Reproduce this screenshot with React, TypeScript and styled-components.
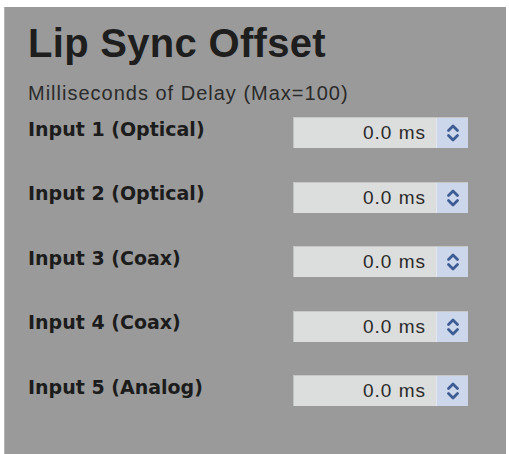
import React, { useState } from "react";
import styled, { createGlobalStyle } from "styled-components";

const GlobalStyle = createGlobalStyle`
	html, body {
		margin: 0;
		padding: 0;
		background-color: #ffffff;
	}
	body {
		font-family: "Liberation Sans", Arial, sans-serif;
	}
`;

const inputs = [
	"Input 1 (Optical)",
	"Input 2 (Optical)",
	"Input 3 (Coax)",
	"Input 4 (Coax)",
	"Input 5 (Analog)",
];

// up/down arrows of the number stepper
const Spinner: React.FC = () => (
	<svg width='14' height='20' viewBox='0 0 14 20'>
		<path
			d='M2.5 7.5 L7 3 L11.5 7.5'
			fill='none'
			stroke='#3d5c94'
			strokeWidth='2.8'
			strokeLinecap='round'
			strokeLinejoin='round'
		/>
		<path
			d='M2.5 12.5 L7 17 L11.5 12.5'
			fill='none'
			stroke='#3d5c94'
			strokeWidth='2.8'
			strokeLinecap='round'
			strokeLinejoin='round'
		/>
	</svg>
);

const App: React.FC = () => {
	const [values] = useState(inputs.map(() => 0));

	return (
		<>
			<GlobalStyle />
			<Panel>
				<Title>Lip Sync Offset</Title>
				<Sub>Milliseconds of Delay (Max=100)</Sub>
				<List>
					{inputs.map((name, i) => (
						<Row key={name}>
							<Label>{name}</Label>
							<Box>
								<Value>{values[i].toFixed(1)} ms</Value>
								<Spin>
									<Spinner />
								</Spin>
							</Box>
						</Row>
					))}
				</List>
			</Panel>
		</>
	);
};

export default App;

const Panel = styled.div`
	margin: 7px 3px 0 4px;
	min-height: 447px;
	background-color: #9a9a9a;
	padding: 16px 0 0 23px;
	box-sizing: border-box;
	border-left: 1px solid #b4b4b4;
`;

const Title = styled.div`
	font-size: 40px;
	line-height: 40px;
	font-weight: 700;
	letter-spacing: 0.3px;
	color: #1e1e1e;
`;

const Sub = styled.div`
	margin-top: 18px;
	font-size: 20px;
	line-height: 24px;
	letter-spacing: 1px;
	color: #2a2a2a;
`;

const List = styled.div`
	margin-top: 12px;
	display: flex;
	flex-direction: column;
	gap: 33.5px;
`;

const Row = styled.div`
	display: flex;
	align-items: center;
	height: 31px;
`;

const Label = styled.div`
	width: 265px;
	margin-bottom: 8px;
	font-family: "DejaVu Sans", Verdana, sans-serif;
	font-size: 19px;
	line-height: 22px;
	font-weight: 700;
	color: #1c1c1c;
`;

const Box = styled.div`
	display: flex;
	width: 175px;
	height: 31px;
	background-color: #dcdddd;
	border-top: 1px solid #c6c6c6;
	border-left: 1px solid #c2c2c2;
	box-sizing: border-box;
`;

const Value = styled.div`
	flex: 1;
	display: flex;
	align-items: center;
	justify-content: flex-end;
	padding-right: 10px;
	font-size: 19px;
	letter-spacing: 1px;
	color: #2a2a2a;
`;

const Spin = styled.div`
	width: 31px;
	display: flex;
	align-items: center;
	justify-content: center;
	background-color: #cdd7ec;
	border-left: 1px solid #e2e7f2;
`;
